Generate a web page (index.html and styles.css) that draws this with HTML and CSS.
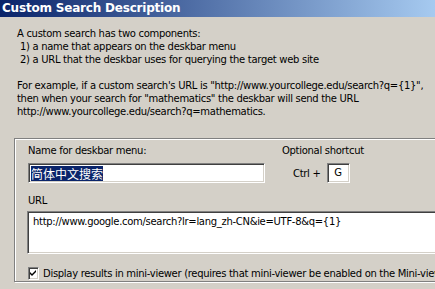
FILE: index.html
```html
<!DOCTYPE html>
<html lang="en">
<head>
    <title>Custom Search Description</title>
    <link rel="stylesheet" href="styles.css">
</head>
<body>

    <div class="titlebar">Custom Search Description</div>

    <div class="intro">
        <p>A custom search has two components:</p>
        <p class="item">1) a name that appears on the deskbar menu</p>
        <p class="item">2) a URL that the deskbar uses for querying the target web site</p>
        <p class="gap">For example, if a custom search's URL is "http://www.yourcollege.edu/search?q={1}",</p>
        <p>then when your search for "mathematics" the deskbar will send the URL</p>
        <p>http://www.yourcollege.edu/search?q=mathematics.</p>
    </div>

    <div class="group">
        <div class="top-row">
            <div class="name-col">
                <label for="name">Name for deskbar menu:</label>
                <div class="field name-field"><span class="selected">简体中文搜索</span></div>
            </div>
            <div class="shortcut-col">
                <div class="shortcut-label">Optional shortcut</div>
                <div class="shortcut-row">
                    <span>Ctrl +</span>
                    <div class="field key-field">G</div>
                </div>
            </div>
        </div>

        <label class="url-label">URL</label>
        <div class="field url-field">http://www.google.com/search?lr=lang_zh-CN&amp;ie=UTF-8&amp;q={1}</div>

        <div class="check-row">
            <span class="checkbox">
                <svg width="9" height="9" viewBox="0 0 9 9"><path d="M1 3 L3 5 L7 1 L7 3 L3 7 L1 5 Z" fill="#000"/></svg>
            </span>
            <span>Display results in mini-viewer (requires that mini-viewer be enabled on the Mini-viewer tab)</span>
        </div>
    </div>

</body>
</html>
```

FILE: styles.css
```css
body {
    margin: 0;
    background-color: #d4d0c8;
    font-family: "DejaVu Sans", sans-serif;
    font-size: 10px;
    letter-spacing: -0.3px;
    color: #000;
    overflow: hidden;
    width: 435px;
    height: 289px;
}
.titlebar {
    height: 17px;
    line-height: 16px;
    padding-left: 2px;
    color: #fff;
    font-weight: bold;
    font-size: 12px;
    letter-spacing: -0.2px;
    background: linear-gradient(to right, #0a246a, #a6caf0);
    white-space: nowrap;
}
.intro {
    padding: 10px 0 0 17px;
    white-space: nowrap;
}
.intro p {
    margin: 0;
    line-height: 13px;
}
.intro .item {
    padding-left: 3px;
}
.intro .gap {
    margin-top: 13px;
}
.group {
    margin: 20px 0 0 14px;
    width: 440px;
    height: 144px;
    box-sizing: border-box;
    border: 1px solid #808080;
    box-shadow: inset 1px 1px #fff, 1px 1px #fff;
    padding: 5px 0 0 13px;
    white-space: nowrap;
}
.top-row {
    display: flex;
}
.name-col {
    display: flex;
    flex-direction: column;
    width: 237px;
}
.name-col label {
    line-height: 13px;
    margin-bottom: 6px;
}
.field {
    box-sizing: border-box;
    background: #fff;
    border-top: 1px solid #808080;
    border-left: 1px solid #808080;
    border-bottom: 1px solid #fff;
    border-right: 1px solid #fff;
    box-shadow: inset 1px 1px #404040, inset -1px -1px #d4d0c8;
}
.name-field {
    height: 20px;
    padding: 2px 0 0 2px;
}
.selected {
    display: inline-block;
    background: #0a246a;
    color: #fff;
    font-family: "Noto Sans CJK SC", sans-serif;
    font-size: 12px;
    letter-spacing: 0;
    line-height: 15px;
}
.shortcut-col {
    margin-left: 17px;
    display: flex;
    flex-direction: column;
}
.shortcut-label {
    line-height: 13px;
    margin-bottom: 6px;
}
.shortcut-row {
    display: flex;
    align-items: center;
    gap: 6px;
    padding-left: 11px;
}
.key-field {
    width: 23px;
    height: 20px;
    text-align: center;
    line-height: 18px;
}
.url-label {
    display: block;
    line-height: 13px;
    margin-top: 11px;
    margin-bottom: 4px;
}
.url-field {
    height: 43px;
    width: 420px;
    margin-left: -1px;
    padding: 3px 0 0 5px;
    line-height: 13px;
}
.check-row {
    display: flex;
    align-items: center;
    gap: 4px;
    margin-top: 13px;
    line-height: 13px;
}
.checkbox {
    box-sizing: border-box;
    width: 13px;
    height: 13px;
    background: #fff;
    border-top: 1px solid #808080;
    border-left: 1px solid #808080;
    border-bottom: 1px solid #fff;
    border-right: 1px solid #fff;
    box-shadow: inset 1px 1px #404040, inset -1px -1px #d4d0c8;
    display: flex;
    align-items: center;
    justify-content: center;
}
```
